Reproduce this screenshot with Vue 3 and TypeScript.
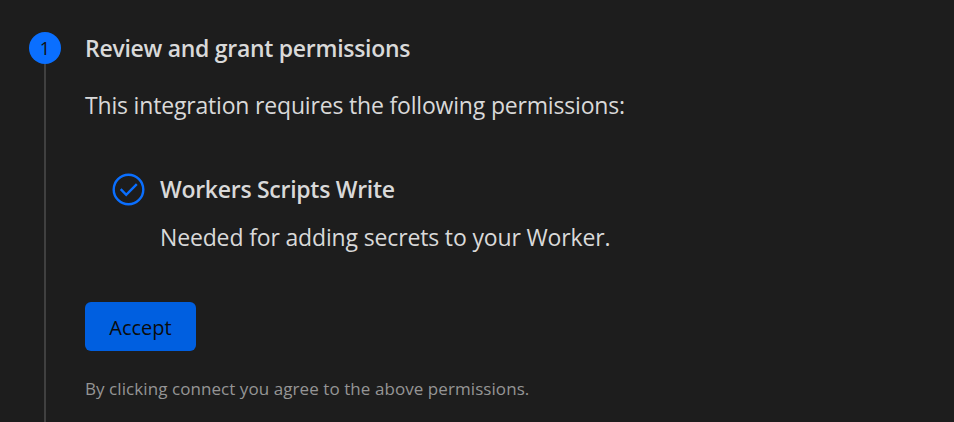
<template>
  <main class="steps">
    <section class="step">
      <div class="rail">
        <span class="step-number">{{ step.number }}</span>
        <span class="rail-line"></span>
      </div>
      <div class="step-body">
        <h2 class="title">{{ step.title }}</h2>
        <p class="intro">{{ step.intro }}</p>
        <ul class="permissions">
          <li v-for="permission in permissions" :key="permission.name" class="permission">
            <svg class="check" viewBox="0 0 32 32" fill="none" aria-hidden="true">
              <circle cx="16.5" cy="16.5" r="14.8" />
              <path d="M8.7 16.2 14.2 21.8 24.8 11.2" />
            </svg>
            <div>
              <h3 class="permission-name">{{ permission.name }}</h3>
              <p class="permission-reason">{{ permission.reason }}</p>
            </div>
          </li>
        </ul>
        <button class="accept" type="button" @click="accepted = true">Accept</button>
        <p class="note">By clicking connect you agree to the above permissions.</p>
      </div>
    </section>
  </main>
</template>

<script setup lang="ts">
import { ref } from "vue";

interface Permission {
  name: string;
  reason: string;
}

const step = {
  number: 1,
  title: "Review and grant permissions",
  intro: "This integration requires the following permissions:",
};

const permissions: Permission[] = [
  { name: "Workers Scripts Write", reason: "Needed for adding secrets to your Worker." },
];

const accepted = ref(false);
</script>

<style>
body {
  background: #1d1d1d;
}
</style>

<style scoped>
.steps {
  box-sizing: border-box;
  height: 422px;
  padding: 32px 29px 0;
  overflow: hidden;
  color: #d9d9d9;
  font-family: "Segoe UI", "Open Sans", "Noto Sans", sans-serif;
  font-size: 23px;
  line-height: 32px;
  white-space: nowrap;
}

.step {
  display: flex;
  gap: 24px;
  height: 100%;
}

.rail {
  display: flex;
  flex-direction: column;
  align-items: center;
  width: 32px;
}
.step-number {
  width: 32px;
  height: 32px;
  border-radius: 50%;
  background: #0a6fff;
  color: #111;
  font-size: 18px;
  text-align: center;
}
.rail-line {
  flex: 1;
  width: 2px;
  background: #404040;
}

h2,
h3,
p,
ul {
  margin: 0;
  padding: 0;
  font-size: inherit;
}

.title,
.permission-name {
  font-weight: 600;
  letter-spacing: -0.28px;
}
.intro {
  margin-top: 25px;
  letter-spacing: -0.18px;
}

.permissions {
  margin: 52px 0 0 27px;
  list-style: none;
}
.permission {
  display: flex;
  gap: 16px;
}
.permission-reason {
  margin-top: 16px;
  letter-spacing: -0.15px;
}
.check {
  width: 32px;
  height: 32px;
  overflow: visible;
  stroke: #0a6fff;
  stroke-width: 2.4;
}

.accept {
  display: block;
  width: 111px;
  height: 49px;
  margin-top: 49px;
  padding: 2px 0 0;
  border: 0;
  border-radius: 6px;
  background: #005fe0;
  color: #0b0b0b;
  font: inherit;
  font-size: 20px;
}

.note {
  margin-top: 22px;
  color: #959595;
  font-size: 17px;
  letter-spacing: 0.07px;
}
</style>
